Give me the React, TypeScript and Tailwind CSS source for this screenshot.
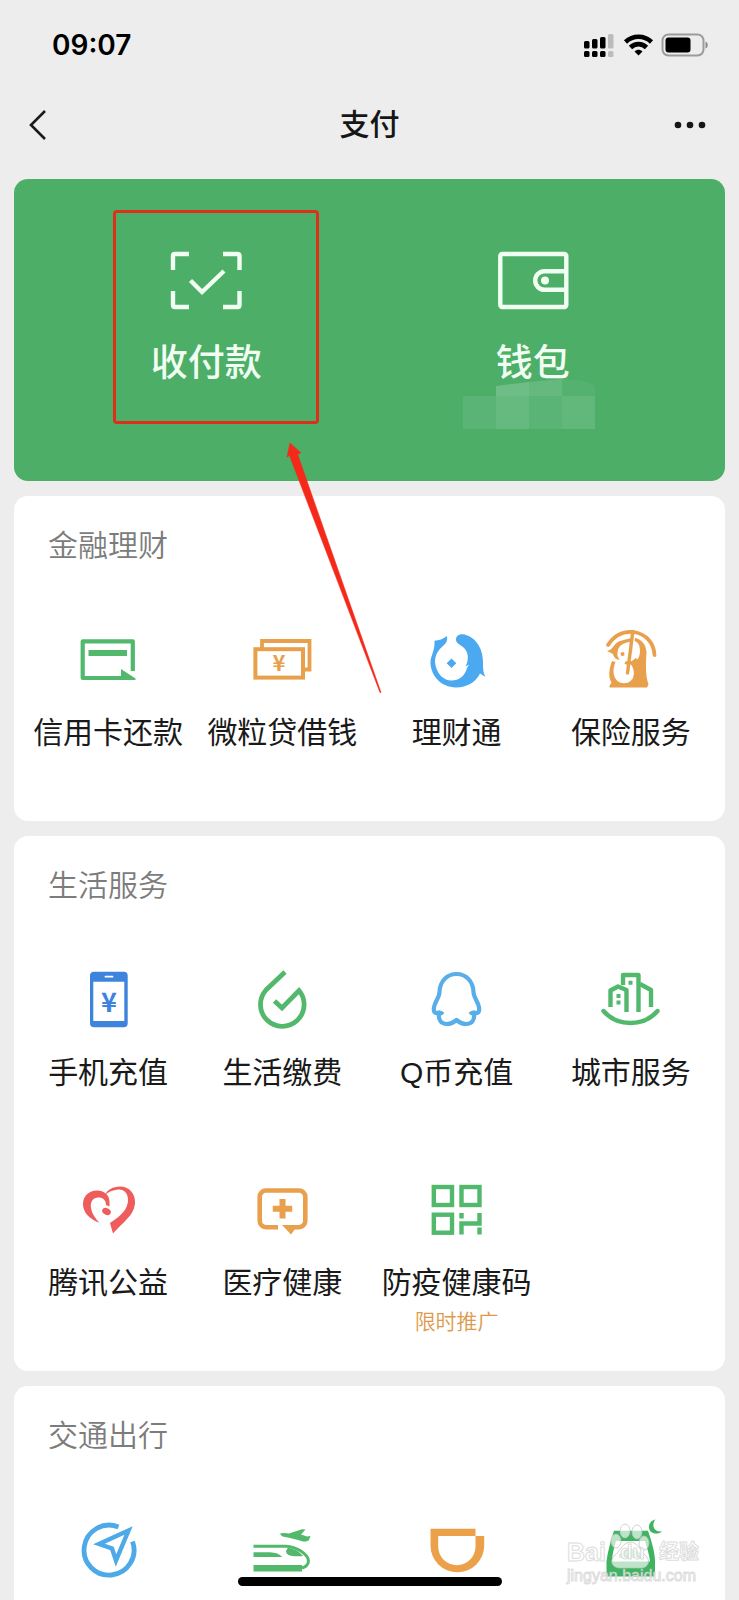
import type { ReactNode } from "react";

const GREEN = "#52b96c";
const ORANGE = "#e8a04c";
const BLUE = "#4aa9f0";

type Service = {
  name: string;
  icon: ReactNode;
  note?: string;
  hideLabel?: boolean;
};

function Icon({ children }: { children: ReactNode }) {
  return (
    <svg viewBox="0 0 60 60" fill="none" className="size-[60px] overflow-visible" aria-hidden="true">
      {children}
    </svg>
  );
}

function CreditCardIcon() {
  return (
    <Icon>
      <path d="M54.8 41V11.3H4.7V48H46" stroke={GREEN} strokeWidth="4.2" strokeLinejoin="round" />
      <path d="M10.5 20H49v6H10.5z" fill={GREEN} />
      <path d="M43 39L57.5 48.5V50H43z" fill={GREEN} />
    </Icon>
  );
}

function LoanIcon() {
  return (
    <Icon>
      <path d="M10 18V11H57.5V39.5H53" stroke={ORANGE} strokeWidth="3.8" />
      <rect x="3.4" y="19.2" width="47.6" height="28.4" stroke={ORANGE} strokeWidth="4" />
      <text x="27" y="41" fontSize="22" fontWeight="700" textAnchor="middle" fill={ORANGE} className="font-['Noto_Sans_CJK_SC',sans-serif]">
        ¥
      </text>
    </Icon>
  );
}

function FundIcon() {
  return (
    <Icon>
      <path
        d="M7.5 10.7C12 10.5 16 9 20 6C20.5 10 20 12 17 15C11 20 8 25 8 32C9 43 16 50.5 24.5 50.5C32 50.5 38 46 40 38L42 34.5L38.5 36.5C42 30 42 22 36 17C32 14 29 13 29 9.5C29 6 32 4.3 35.5 4.3C47 5.5 56 17 56 32C56 38 56 42 58.5 47L53 43.5C49 52 40 57.5 29 57.5C14 57 3.5 46 3.5 32C3.5 26 8 21 7.5 10.7Z"
        fill={BLUE}
      />
      <path d="M24.5 28.5L29.3 33.3L24.5 38.1L19.7 33.3Z" fill={BLUE} />
    </Icon>
  );
}

function InsuranceIcon() {
  return (
    <Icon>
      <path d="M7 15C14 4 24 1 33 2C45 4 53 13 53.5 25" stroke={ORANGE} strokeWidth="3.8" strokeLinecap="round" />
      <path
        d="M34 8C40 9 45 14 45.5 22C45 32 44 44 47.5 54.5L46 57.5H9C8 57 8 56 10.5 52.5C7 47 8 39 11 31L14.5 32C12 38 11.5 45 15.5 50C20 55 28 54 31.5 49C34 44 33 38 29.5 34C35 33 39 28 39 21C39 15 37 12 33.5 11Z"
        fill={ORANGE}
      />
      <path d="M6 21C13 20 12 12 21 10.5C26 9 28 8.5 30 8.5L29 12C22 12.5 18 16 17 20C16 24 16 27 19 30L15 29C13 27 12 25 12 24Z" fill={ORANGE} />
      <path d="M31.5 4L26.5 43" stroke={ORANGE} strokeWidth="3.4" strokeLinecap="round" />
      <path d="M24 32.5C28 34 32 33 36 29" stroke={ORANGE} strokeWidth="3" />
      <circle cx="21.5" cy="24" r="2" fill={ORANGE} />
    </Icon>
  );
}

function PhoneIcon() {
  return (
    <Icon>
      <rect x="12" y="1.7" width="37.7" height="55.6" rx="4" fill="#3e84dd" />
      <path d="M15.3 11.7h31v39.3h-31z" fill="#fff" />
      <path d="M27.5 6.7h7" stroke="#fff" strokeWidth="1.8" strokeLinecap="round" />
      <text x="31" y="42" fontSize="27" fontWeight="700" textAnchor="middle" fill="#3e84dd" className="font-['Noto_Sans_CJK_SC',sans-serif]">
        ¥
      </text>
    </Icon>
  );
}

function UtilitiesIcon() {
  return (
    <Icon>
      <path d="M33 2L14 20A21.8 21.8 0 1 0 47 20.5L30 38L22.5 31" stroke={GREEN} strokeWidth="4.8" />
    </Icon>
  );
}

function PenguinIcon() {
  return (
    <Icon>
      <path
        d="M29.5 4C20 4 13 11 12.5 22C12.5 28 7 32 6.8 39C6.8 43 9 44 12 42.5C13.5 44 14.5 43.5 15.5 41.5M12 43C11 50 14 54 20 54C25 54 27 52 29.5 50C32 52 34 54 39 54C45 54 48 50 47 43M43.5 41.5C44.5 43.5 45.5 44 47 42.5C50 44 52.2 43 52.2 39C52 32 46.5 28 46.5 22C46 11 39 4 29.5 4"
        stroke="#58aee9"
        strokeWidth="4.2"
        strokeLinejoin="round"
      />
    </Icon>
  );
}

function CityIcon() {
  return (
    <Icon>
      <g stroke={GREEN} strokeWidth="4.4" strokeLinejoin="round">
        <path d="M2.5 41C16 57 43 57 56.5 41" strokeLinecap="round" />
        <path d="M9.5 37V20.5L17 16.5L25.5 20V42" />
        <path d="M22 15V5H37.5V42" />
        <path d="M39 14L50 20V37" />
      </g>
      <path d="M27.5 10.7h4v4h-4zM15.5 24h4v4h-4zM15.5 30.5h4v4h-4z" fill={GREEN} />
    </Icon>
  );
}

function CharityIcon() {
  return (
    <Icon>
      <path
        d="M21.3 42.7C11 39 5 32 5 24C5 16 11 10.5 19 10.5C26 10.5 31.5 15 31.5 22V26.5L28 25C28 20 25 17.5 20.5 17.5C15 17.5 12 22 13 28C14 34 17 38 21.3 42.7Z"
        fill="#ee5c5c"
      />
      <path
        d="M27 15C29 10 35 6.5 42 6.5C51 6.5 57 13 57 22C57 35 45 42 35 53.5L32 43C43 36 50 29 50 20C50 12 45 9 40 9.5C35 10 30 12 27 15Z"
        fill="#ee5c5c"
      />
      <ellipse cx="28.5" cy="31.5" rx="4.5" ry="3.3" transform="rotate(25 28.5 31.5)" fill="#ee5c5c" />
    </Icon>
  );
}

function MedicalIcon() {
  return (
    <Icon>
      <path
        d="M26 47.2H14A6.2 6.2 0 0 1 7.7 41V16.7A6.2 6.2 0 0 1 14 10.5H47A6.2 6.2 0 0 1 53.3 16.7V41A6.2 6.2 0 0 1 47 47.2H36"
        stroke={ORANGE}
        strokeWidth="4.6"
      />
      <path d="M30 45H46L39 54.5Z" fill={ORANGE} />
      <path d="M30.5 19v19.4M20.8 28.7h19.4" stroke={ORANGE} strokeWidth="6" />
    </Icon>
  );
}

function HealthCodeIcon() {
  return (
    <Icon>
      <g stroke={GREEN} strokeWidth="4.4">
        <rect x="6.8" y="7" width="18.2" height="18" />
        <rect x="34.5" y="7" width="18" height="18" />
        <rect x="6.8" y="34.7" width="18.2" height="18" />
        <path d="M52.5 33V43.5H34.5V54.5" />
      </g>
      <path d="M32.3 33h4.4v5.5h-4.4zM50.3 47.5h4.4v7h-4.4z" fill={GREEN} />
    </Icon>
  );
}

function TravelIcon() {
  return (
    <Icon>
      <path d="M40.5 7A25 25 0 1 0 54.5 21.5" stroke="#4da9e8" strokeWidth="4.8" />
      <path d="M50.5 10.5L21 24L34 28.5L38 40.5Z" stroke="#4da9e8" strokeWidth="4.4" />
    </Icon>
  );
}

function TrainIcon() {
  return (
    <Icon>
      <path d="M1.5 26.2H34C44 26.5 56 34 56.5 41C56.5 45 53 48 48 48" stroke={GREEN} strokeWidth="3" />
      <path d="M1.5 32.3H18C23 32.5 28 34 30 37H1.5zM1.5 45H50V51.5H1.5zM36 27.5C43 29 48 32 51 36C44 36.5 34 37 34 31Z" fill={GREEN} />
      <path d="M28 13.5C31 12.5 34 13 37 13.5L50 9.3L53.5 9.5L49 14.5L55 16.5L58.5 16L57 20C54 22.5 50 21.5 46 20L36 17.5C32 17 29 16.5 28 13.5Z" fill={GREEN} />
    </Icon>
  );
}

function RideIcon() {
  return (
    <Icon>
      <path
        d="M3.5 8.7H48.5V16H57.2V25.5A26.85 26.85 0 0 1 3.5 25.5ZM11.2 16V26.5A18.65 18.65 0 0 0 48.5 26.5V16Z"
        fill="#eda04a"
        fillRule="evenodd"
      />
    </Icon>
  );
}

function HotelIcon() {
  return (
    <Icon>
      <path d="M54.5 -0.5C51 3 51 12 61 11.5C57 15 49 14 48 8C47.5 3 51 0 54.5 -0.5Z" fill="#3fb360" />
      <path
        d="M13 10.7H47C50 20 53.5 30 54 40V56.5H5.5V41C7 30 10 20 13 10.7ZM15 21C13 28 11 35 11 41.5H49C48.5 35 46 28 44 21Z"
        fill="#3fb360"
        fillRule="evenodd"
      />
      <path d="M18 34Q29 24 41 34V38H18Z" fill="#3fb360" opacity="0.5" />
    </Icon>
  );
}

const finance: Service[] = [
  { name: "信用卡还款", icon: <CreditCardIcon /> },
  { name: "微粒贷借钱", icon: <LoanIcon /> },
  { name: "理财通", icon: <FundIcon /> },
  { name: "保险服务", icon: <InsuranceIcon /> },
];

const life: Service[] = [
  { name: "手机充值", icon: <PhoneIcon /> },
  { name: "生活缴费", icon: <UtilitiesIcon /> },
  { name: "Q币充值", icon: <PenguinIcon /> },
  { name: "城市服务", icon: <CityIcon /> },
  { name: "腾讯公益", icon: <CharityIcon /> },
  { name: "医疗健康", icon: <MedicalIcon /> },
  { name: "防疫健康码", icon: <HealthCodeIcon />, note: "限时推广" },
];

const transport: Service[] = [
  { name: "出行服务", icon: <TravelIcon />, hideLabel: true },
  { name: "火车票机票", icon: <TrainIcon />, hideLabel: true },
  { name: "滴滴出行", icon: <RideIcon />, hideLabel: true },
  { name: "酒店", icon: <HotelIcon />, hideLabel: true },
];

function StatusBar() {
  return (
    <div className="flex h-[90px] shrink-0 items-center justify-between pr-[30px] pl-[52px]">
      <span className="font-['Inter','Liberation_Sans',sans-serif] text-[28px] leading-9 font-semibold text-black">
        09:07
      </span>
      <svg viewBox="0 0 126 24" className="h-6 w-[126px]" aria-hidden="true">
        <g fill="#000">
          <rect x="1" y="8" width="5.5" height="7.5" rx="1.5" />
          <rect x="9" y="6" width="5.5" height="9.5" rx="1.5" />
          <rect x="17" y="4" width="5.5" height="11.5" rx="1.5" />
          <rect x="1" y="18" width="5.5" height="6" rx="1.5" />
          <rect x="9" y="18" width="5.5" height="6" rx="1.5" />
          <rect x="17" y="18" width="5.5" height="6" rx="1.5" />
        </g>
        <g fill="#bcbcbc">
          <rect x="25" y="1" width="5.5" height="14.5" rx="1.5" />
          <rect x="25" y="18" width="5.5" height="6" rx="1.5" />
        </g>
        <g fill="none" stroke="#000" strokeWidth="4.6">
          <path d="M42.5 9C50 2 61 2 68.5 9" />
          <path d="M47.5 14.5C52 10 59 10 63.5 14.5" />
        </g>
        <path d="M51.5 18.5C54 16 57 16 59.5 18.5L55.5 22.5Z" fill="#000" />
        <rect x="79.5" y="1.5" width="41" height="21" rx="6" fill="none" stroke="#9b9b9b" strokeWidth="2" />
        <rect x="82.5" y="4.5" width="25" height="15" rx="3" fill="#000" />
        <path d="M122.5 8.5C125.5 9.5 125.5 14.5 122.5 15.5Z" fill="#8a8a8a" />
      </svg>
    </div>
  );
}

function NavBar() {
  return (
    <header className="flex h-[70px] shrink-0 items-center justify-between px-[29px]">
      <button type="button" aria-label="返回" className="flex w-10 justify-start">
        <svg viewBox="0 0 18 32" fill="none" className="h-8 w-[18px]">
          <path d="M16 2L2 16L16 30" stroke="#1a1a1a" strokeWidth="2.6" />
        </svg>
      </button>
      <h1 className="text-[30px] leading-10 font-medium text-[#161616]">支付</h1>
      <button type="button" aria-label="更多" className="flex w-10 justify-end">
        <svg viewBox="0 0 36 8" className="h-2 w-9" fill="#161616">
          <circle cx="4" cy="4" r="3.3" />
          <circle cx="16" cy="4" r="3.3" />
          <circle cx="28" cy="4" r="3.3" />
        </svg>
      </button>
    </header>
  );
}

function PayCard() {
  return (
    <section className="relative grid shrink-0 grid-cols-2 rounded-[14px] bg-[#4dae68] px-[29px] pt-[72px] pb-[90px] text-[#f0fff2]">
      <button type="button" className="flex flex-col items-center">
        <svg viewBox="0 0 72 60" fill="none" className="h-[60px] w-[72px]" aria-hidden="true">
          <g stroke="currentColor" strokeWidth="4.4">
            <path d="M3 19V5Q3 3 5 3H19M53 3H67Q69.5 3 69.5 5V19M69.5 40V54Q69.5 56 67.5 56H53M19 56H5Q3 56 3 54V40" />
            <path d="M20.5 29.5L32 41L54 20" />
          </g>
        </svg>
        <span className="mt-[26px] text-[37px] leading-[54px] font-medium">收付款</span>
      </button>
      <button type="button" className="relative flex flex-col items-center">
        <svg viewBox="0 0 72 60" fill="none" className="h-[60px] w-[72px]" aria-hidden="true">
          <g stroke="currentColor" strokeWidth="4.4">
            <rect x="3.3" y="3" width="66" height="53" rx="2" />
            <path d="M69 20.2H47.5A9.3 9.3 0 0 0 47.5 38.8H69" />
          </g>
          <circle cx="48" cy="29.5" r="4" fill="currentColor" />
        </svg>
        <span className="mt-[26px] text-[37px] leading-[54px] font-medium">钱包</span>
        {/* censored balance */}
        <svg viewBox="0 0 132 50" className="absolute top-32 left-1/2 h-[50px] w-[132px] -translate-x-[70px]" aria-hidden="true">
          <path d="M0 17H33V50H0z" fill="#5ab475" />
          <path d="M33 17H66V50H33z" fill="#66ba7f" />
          <path d="M66 17H99V50H66z" fill="#5ab475" />
          <path d="M99 17H132V50H99z" fill="#62b87b" />
          <path d="M33 7L66 3V17H33z" fill="#6fbd86" />
          <path d="M66 3L99 0V17H66z" fill="#65b97e" />
          <path d="M99 0Q122 0 132 7V17H99z" fill="#54b16f" />
        </svg>
      </button>
      <div className="pointer-events-none absolute top-[31px] left-[99px] h-[214px] w-[206px] rounded-[4px] border-[3px] border-[#dc3019]" />
      <svg viewBox="0 0 98 252" className="pointer-events-none absolute top-[263px] left-[271px] z-10 h-[252px] w-[98px]" aria-hidden="true">
        <path d="M5 1L16 11L12.5 12L96 250.5H95L4.5 13.5L2 15Z" fill="#f5291a" stroke="#f5291a" strokeWidth="0.6" />
      </svg>
    </section>
  );
}

function ServiceCard({ title, services }: { title: string; services: Service[] }) {
  return (
    <section className="shrink-0 rounded-[14px] bg-white">
      <h2 className="px-[34px] pt-[29px] pb-11 text-[30px] leading-[42px] font-[350] text-[#7c7c7c]">{title}</h2>
      <div className="grid grid-cols-4 px-[7px]">
        {services.map((s) => (
          <button
            key={s.name}
            type="button"
            aria-label={s.hideLabel ? s.name : undefined}
            className="flex min-h-[210px] flex-col items-center pt-[19px] whitespace-nowrap"
          >
            {s.icon}
            {!s.hideLabel && <span className="mt-[22px] text-[30px] leading-[42px] text-[#1a1a1a]">{s.name}</span>}
            {s.note && <span className="mt-[3px] text-[21px] leading-[30px] font-[350] text-[#dd9a4c]">{s.note}</span>}
          </button>
        ))}
      </div>
    </section>
  );
}

function Watermark() {
  return (
    <div className="pointer-events-none absolute right-[40px] bottom-[14px] z-20 flex w-[132px] flex-col text-white/80 [-webkit-text-stroke:1px_rgba(190,190,190,0.55)]">
      <div className="relative flex items-center justify-between text-[25px] leading-7 font-bold">
        <span>Bai</span>
        <svg viewBox="0 0 40 48" className="absolute -top-4 left-[43px] h-12 w-10" fill="rgba(255,255,255,0.65)" stroke="rgba(190,190,190,0.7)" aria-hidden="true">
          <ellipse cx="15" cy="9" rx="5" ry="7" />
          <ellipse cx="27" cy="10" rx="5" ry="7" />
          <ellipse cx="6" cy="19" rx="5" ry="7" />
          <ellipse cx="34" cy="21" rx="5" ry="7" />
          <path d="M20 20C12 21 10 30 4 34C-1 40 3 46 10 46H31C38 46 41 39 36 34C30 29 28 20 20 20Z" />
        </svg>
        <span className="relative text-xl leading-7">du</span>
        <span className="text-xl leading-7">经验</span>
      </div>
      <span className="text-base leading-5">jingyan.baidu.com</span>
    </div>
  );
}

export default function App() {
  return (
    <div className="relative flex h-screen flex-col overflow-hidden bg-[#ededed] font-['Liberation_Sans','Noto_Sans_CJK_SC',sans-serif]">
      <StatusBar />
      <NavBar />
      <main className="flex min-h-0 flex-1 flex-col gap-[15px] overflow-hidden px-[14px] pt-[19px]">
        <PayCard />
        <ServiceCard title="金融理财" services={finance} />
        <ServiceCard title="生活服务" services={life} />
        <ServiceCard title="交通出行" services={transport} />
      </main>
      <Watermark />
      <div className="absolute bottom-[14px] left-1/2 z-10 h-[9px] w-[264px] -translate-x-1/2 rounded-full bg-black" />
    </div>
  );
}
